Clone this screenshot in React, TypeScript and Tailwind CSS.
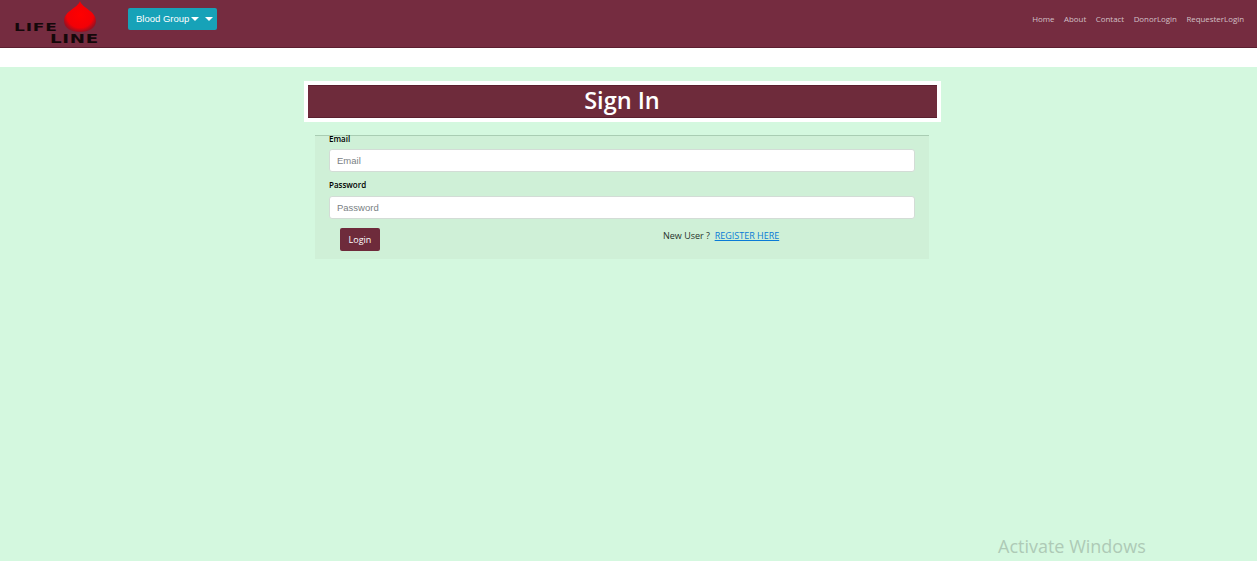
function Logo() {
  return (
    <div className="relative w-[100px] h-[47px] ml-[14px] shrink-0">
      <svg className="absolute left-[49px] top-0" width="50" height="34" viewBox="0 0 50 34">
        <defs>
          <radialGradient id="drop" cx="50%" cy="45%" r="55%">
            <stop offset="0%" stopColor="#ff0000" />
            <stop offset="75%" stopColor="#f20006" />
            <stop offset="100%" stopColor="#9c1020" />
          </radialGradient>
        </defs>
        <path d="M17 1 C19 8 33 11 33 21 C33 28 26 32 17 32 C8 32 1 28 1 21 C1 11 15 8 17 1 Z" fill="url(#drop)" />
      </svg>
      <span className="absolute left-0 top-[21px] font-['DejaVu_Sans'] font-bold text-[11px] leading-[14px] tracking-[0.5px] text-[#14080a] scale-x-[1.55] origin-left">LIFE</span>
      <span className="absolute left-[36px] top-[31px] font-['DejaVu_Sans'] font-bold text-[13px] leading-[16px] tracking-[0.5px] text-[#14080a] scale-x-[1.4] origin-left">LINE</span>
    </div>
  );
}

function Caret() {
  return <span className="inline-block w-0 h-0 border-x-[4px] border-x-transparent border-t-[4px] border-t-white" />;
}

export default function App() {
  const links = ["Home", "About", "Contact", "DonorLogin", "RequesterLogin"];

  return (
    <div className="h-[561px] flex flex-col bg-white font-['Open_Sans',sans-serif] overflow-hidden relative">
      {/* Navbar */}
      <nav className="h-[48px] shrink-0 flex items-start bg-[#752c40] border-b border-[#5c1f30]">
        <Logo />
        <button className="ml-[14px] mt-[8px] h-[22px] w-[89px] flex items-center pl-[8px] gap-[2px] rounded-[2px] bg-[#17a2b8] text-white text-[9.5px] font-['Liberation_Sans',sans-serif]">
          Blood Group <Caret />
          <span className="ml-[4px] flex"><Caret /></span>
        </button>
        <ul className="ml-auto mr-[13px] mt-[13px] flex gap-[9.5px] text-[7.9px] leading-[13px] text-[#d3c0c6]">
          {links.map((l) => (
            <li key={l}>{l}</li>
          ))}
        </ul>
      </nav>

      {/* Page body */}
      <main className="mt-[19px] flex-1 bg-[#d4f8df] flex flex-col items-center pt-[14px] pr-[13px]">
        <div className="w-[637px] h-[41px] bg-white p-[4px]">
          <h1 className="h-[33px] pb-[2px] flex items-center justify-center bg-[#6e2b3b] border-y border-[#5a1f2e] text-white text-[23.5px] font-semibold">
            Sign In
          </h1>
        </div>

        <form className="w-[614px] h-[124px] mt-[13px] bg-[#cff0d7] border-t border-[#a9cdb3] px-[14px] relative">
          <label className="block text-[8px] font-semibold leading-[12px] -mt-[3px] text-black">Email</label>
          <input
            placeholder="Email"
            className="block mt-[4px] w-full h-[23px] px-[7px] rounded-[3px] bg-white border border-[#d3dcd6] text-[9.5px] font-['Liberation_Sans',sans-serif] placeholder:text-[#7a7f84] outline-none"
          />
          <label className="block mt-[7px] text-[8px] font-semibold leading-[12px] text-black">Password</label>
          <input
            placeholder="Password"
            className="block mt-[5px] w-full h-[23px] px-[7px] rounded-[3px] bg-white border border-[#d3dcd6] text-[9.5px] font-['Liberation_Sans',sans-serif] placeholder:text-[#7a7f84] outline-none"
          />
          <div className="flex items-start mt-[9px] ml-[11px]">
            <button type="button" className="w-[40px] h-[23px] rounded-[2px] bg-[#6e2b3b] text-white text-[9px]">
              Login
            </button>
            <p className="ml-[283px] mt-[1px] text-[9px] leading-[13px] text-[#26332b]">
              New User ?&nbsp; <a className="text-[#0a7bd6] underline">REGISTER HERE</a>
            </p>
          </div>
        </form>
      </main>

      {/* Windows watermark */}
      <div className="absolute left-[998px] top-[534px] text-[18px] leading-[24px] text-[#aecab6]">Activate Windows</div>
    </div>
  );
}
